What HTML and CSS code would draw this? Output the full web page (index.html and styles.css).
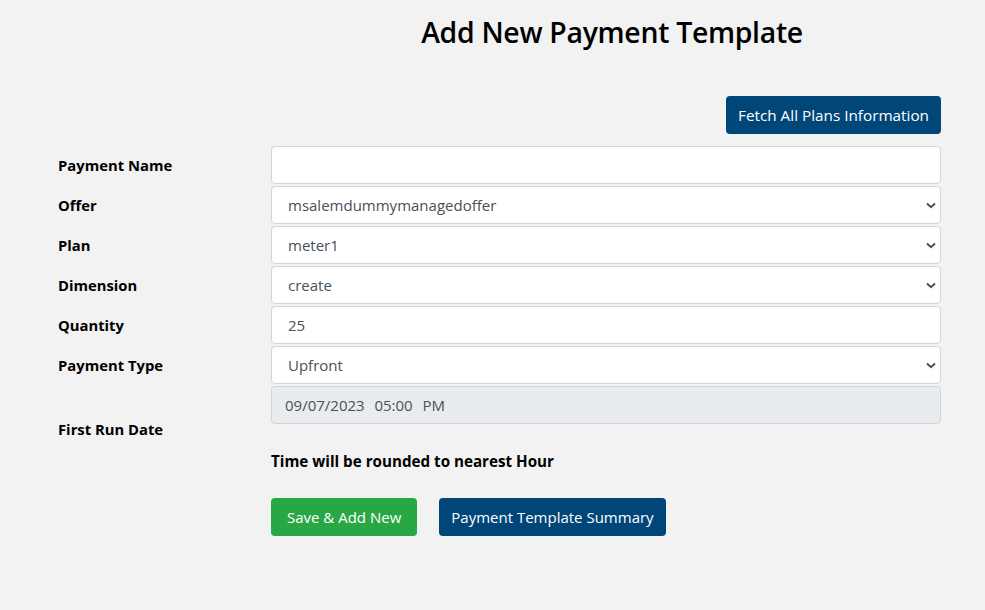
FILE: index.html
```html
<!DOCTYPE html>
<html>
<head>
<meta charset="utf-8">
<link rel="stylesheet" href="styles.css">
</head>
<body>
<main class="page">
  <h1 class="title">Add New Payment Template</h1>
  <div class="toolbar">
    <button class="btn btn-navy" type="button">Fetch All Plans Information</button>
  </div>
  <form class="form">
    <div class="row">
      <label class="label">Payment Name</label>
      <div class="field"><input class="control" type="text" value=""></div>
    </div>
    <div class="row">
      <label class="label">Offer</label>
      <div class="field"><select class="control select"><option>msalemdummymanagedoffer</option></select></div>
    </div>
    <div class="row">
      <label class="label">Plan</label>
      <div class="field"><select class="control select"><option>meter1</option></select></div>
    </div>
    <div class="row">
      <label class="label">Dimension</label>
      <div class="field"><select class="control select"><option>create</option></select></div>
    </div>
    <div class="row">
      <label class="label">Quantity</label>
      <div class="field"><input class="control" type="text" value="25"></div>
    </div>
    <div class="row">
      <label class="label">Payment Type</label>
      <div class="field"><select class="control select"><option>Upfront</option></select></div>
    </div>
    <div class="row">
      <label class="label">First Run Date</label>
      <div class="field">
        <input class="control date" type="text" value="09/07/2023  05:00  PM" disabled>
        <p class="note">Time will be rounded to nearest Hour</p>
      </div>
    </div>
    <div class="actions">
      <button class="btn btn-green btn-wide" type="button">Save &amp; Add New</button>
      <button class="btn btn-navy" type="button">Payment Template Summary</button>
    </div>
  </form>
</main>
</body>
</html>
```

FILE: styles.css
```css
html, body {
  margin: 0;
  padding: 0;
  background: #f2f2f2;
  font-family: "Open Sans", "Noto Sans", sans-serif;
  color: #000;
}

.page {
  padding: 12px 44px 0 58px;
}

.title {
  margin: 0 0 0 213px;
  padding-left: 12px;
  text-align: center;
  font-size: 28.4px;
  font-weight: 600;
  line-height: 40px;
  letter-spacing: -0.3px;
}

.toolbar {
  display: flex;
  justify-content: flex-end;
  margin-top: 44px;
  margin-bottom: 12px;
}

.btn {
  font-family: inherit;
  font-size: 15px;
  height: 38px;
  padding: 0 12px;
  border: 0;
  border-radius: 4px;
  color: #fff;
  cursor: pointer;
}

.toolbar .btn {
  font-size: 15.3px;
}

.btn-wide {
  padding: 0 16px;
}

.btn-navy { background: #004679; }
.btn-green { background: #28a745; }

.form {
  display: flex;
  flex-direction: column;
  gap: 2px;
}

.row {
  display: flex;
  align-items: center;
}

.label {
  width: 213px;
  flex: none;
  font-weight: 700;
  font-size: 14.8px;
}

.field {
  flex: 1;
}

.control {
  display: block;
  box-sizing: border-box;
  width: 100%;
  height: 38px;
  margin: 0;
  padding: 0 12px 0 16px;
  border: 1px solid #ced4da;
  border-radius: 4px;
  background: #fff;
  font-family: inherit;
  font-size: 15px;
  color: #495057;
}

.select {
  appearance: none;
  -webkit-appearance: none;
  background-image: url("data:image/svg+xml,%3Csvg xmlns='http://www.w3.org/2000/svg' width='10' height='7' viewBox='0 0 10 7'%3E%3Cpath d='M1 1.5 L5 5.2 L9 1.5' fill='none' stroke='%23495057' stroke-width='2'/%3E%3C/svg%3E");
  background-repeat: no-repeat;
  background-position: right 4px center;
  background-size: 10px 7px;
}

.date {
  padding-left: 13px;
  background: #e9ecef;
  border-color: #ced4da;
  color: #495057;
  word-spacing: 1px;
}

.note {
  margin: 0;
  padding: 27px 0 0 0;
  height: 47px;
  box-sizing: border-box;
  font-weight: 700;
  font-size: 15.2px;
}

.actions {
  display: flex;
  gap: 22px;
  margin-left: 213px;
  margin-top: 25px;
}
```
